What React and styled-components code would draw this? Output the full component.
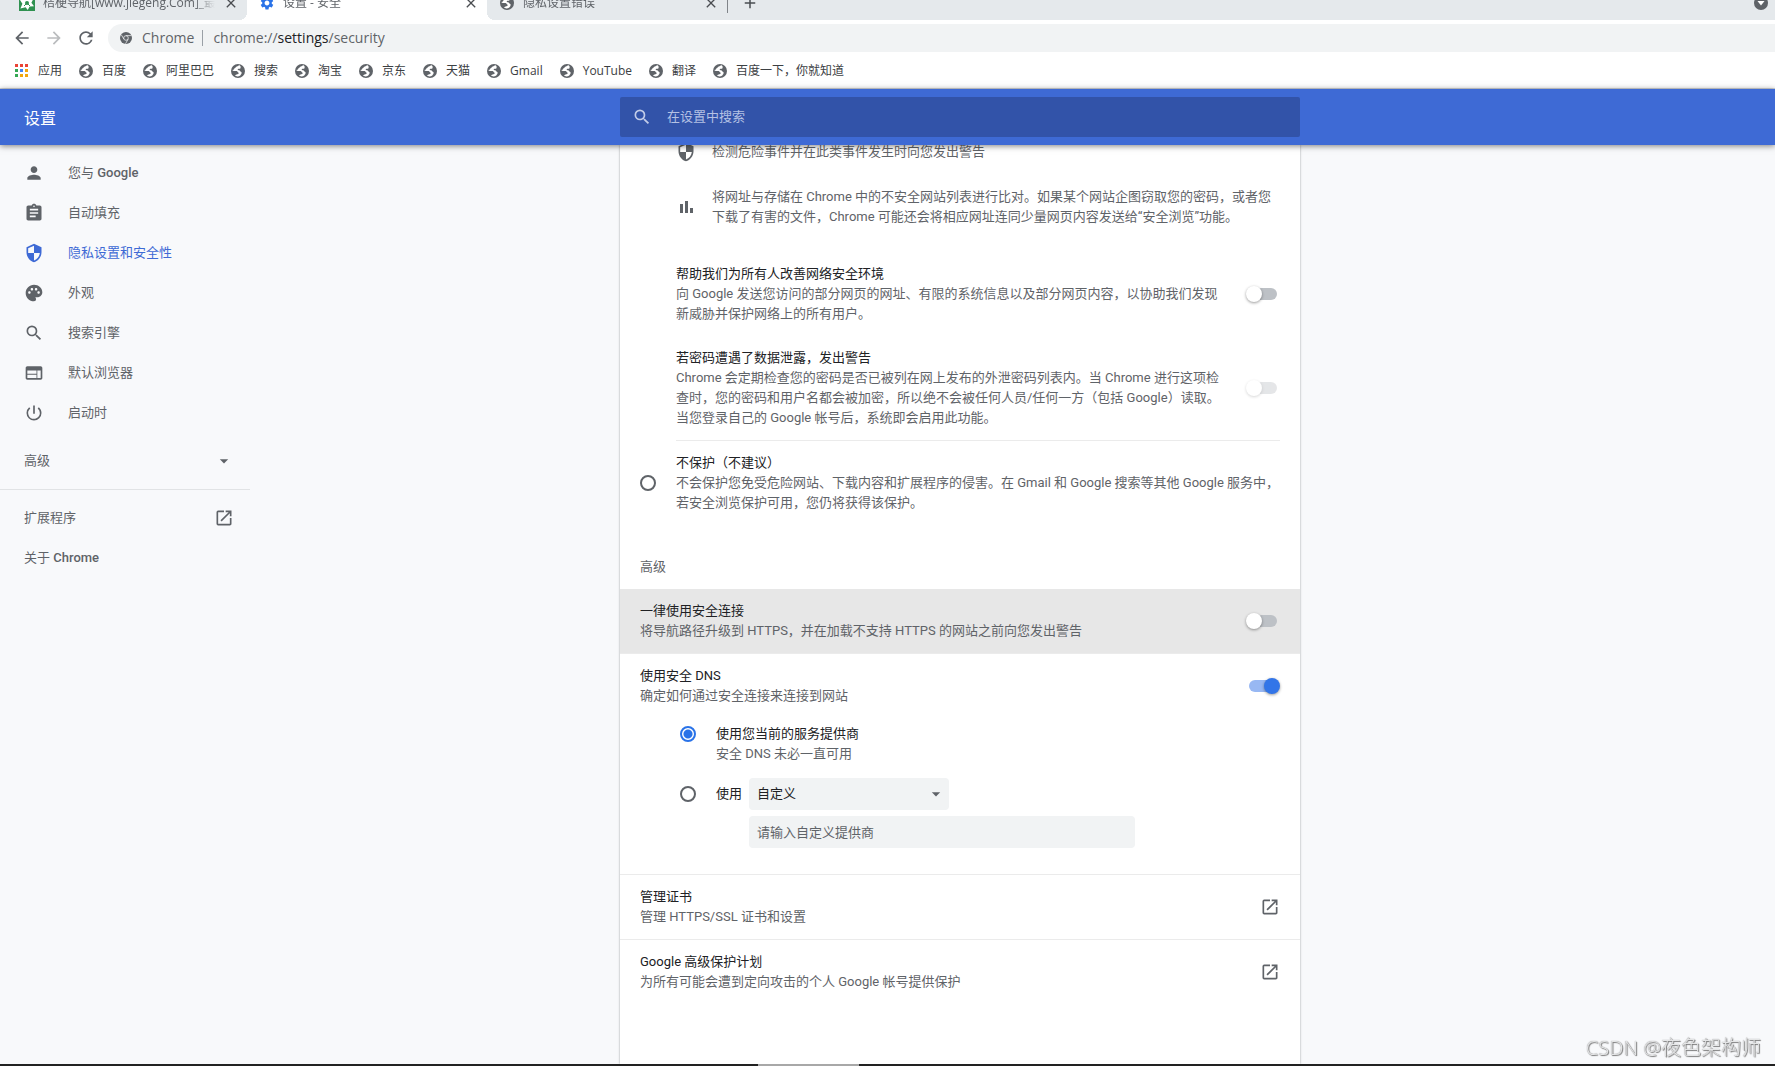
import React, { useState } from 'react'
import styled, { createGlobalStyle } from 'styled-components'
import {
  MdAdd,
  MdArrowBack,
  MdArrowDropDown,
  MdArrowForward,
  MdAssignment,
  MdClose,
  MdOpenInNew,
  MdPalette,
  MdPerson,
  MdPowerSettingsNew,
  MdRefresh,
  MdSearch,
  MdSecurity,
  MdSettings,
  MdWeb,
} from 'react-icons/md'

const GlobalStyle = createGlobalStyle`
  * {
    box-sizing: border-box;
  }
  body {
    margin: 0;
    background: #f8f9fb;
    color: #202124;
    font-family: Roboto, "Noto Sans CJK SC", sans-serif;
    font-size: 13px;
    line-height: 20px;
  }
  button, input, select {
    font: inherit;
    color: inherit;
  }
  button {
    display: flex;
    padding: 0;
    border: none;
    background: none;
    cursor: pointer;
  }
  a {
    color: inherit;
    text-decoration: none;
  }
  svg {
    display: block;
    flex: none;
  }
`
const Window = styled.div`
  height: 100vh;
  display: flex;
  flex-direction: column;
  overflow: hidden;
`
const Browser = styled.div`
  flex: none;
  background: #fff;
  border-bottom: 1px solid #d5d7da;
  font-family: "Open Sans", "Noto Sans CJK SC", sans-serif;
  font-size: 12px;
`
const TabStrip = styled.div`
  height: 20px;
  display: flex;
  align-items: flex-end;
  padding: 0 7px;
  background: #e5e9ec;
  overflow: hidden;
`
const Tab = styled.div`
  position: relative;
  width: 240px;
  height: 34px;
  display: flex;
  align-items: center;
  gap: 8px;
  padding: 0 8px 0 12px;
  color: #5f6368;
  background: ${props => props.$active ? '#fff' : 'transparent'};

  /* rounded feet of the selected tab */
  &::before, &::after {
    content: "";
    display: ${props => props.$active ? 'block' : 'none'};
    position: absolute;
    bottom: 0;
    width: 8px;
    height: 8px;
  }
  &::before {
    right: 100%;
    background: radial-gradient(circle at 0 0, transparent 8px, #fff 8px);
  }
  &::after {
    left: 100%;
    background: radial-gradient(circle at 100% 0, transparent 8px, #fff 8px);
  }
`
const TabTitle = styled.span`
  flex: 1;
  overflow: hidden;
  white-space: nowrap;
  mask-image: linear-gradient(to right, #000 88%, transparent);
`
const TabDivider = styled.span`
  width: 1px;
  height: 20px;
  margin: 0 13px 7px 0;
  background: #808489;
`
const StripButton = styled.button`
  height: 34px;
  align-items: center;
  color: #4a4d51;
`
const Spacer = styled.span`
  flex: 1;
`
const Toolbar = styled.div`
  display: flex;
  align-items: center;
  gap: 12px;
  padding: 4px 0 0 12px;
`
const ToolButton = styled.button`
  color: ${props => props.$off ? '#babcbe' : '#5f6368'};
`
const Omnibox = styled.div`
  flex: 1;
  height: 28px;
  display: flex;
  align-items: center;
  padding-left: 12px;
  border-radius: 14px 0 0 14px;
  background: #f1f3f4;
  color: #5f6368;
  font-size: 14px;
`
const SiteName = styled.span`
  padding: 0 8px 0 10px;
`
const SiteDivider = styled.span`
  width: 1px;
  height: 16px;
  margin-right: 10px;
  background: #9aa0a6;
`
const Address = styled.span`
  outline: none;

  b {
    color: #202124;
    font-weight: normal;
  }
`
const Bookmarks = styled.nav`
  height: 36px;
  display: flex;
  align-items: center;
  gap: 16px;
  padding: 1px 0 0 14px;
`
const Bookmark = styled.a`
  display: flex;
  align-items: center;
  gap: 8px;
  color: #3c4043;
  white-space: nowrap;
`
const Header = styled.header`
  position: relative;
  z-index: 1;
  flex: none;
  height: 56px;
  display: grid;
  grid-template-columns: 620fr minmax(0, 680px) 475fr;
  align-items: center;
  background: #3e6ad5;
  color: #fff;
  box-shadow: 0 1px 6px rgba(0, 0, 0, 0.5);
`
const PageTitle = styled.h1`
  margin: 4px 0 0;
  padding-left: 24px;
  font-size: 16px;
  font-weight: normal;
`
const SearchBox = styled.label`
  height: 40px;
  display: flex;
  align-items: center;
  gap: 15px;
  padding: 0 12px;
  border-radius: 2px;
  background: #3253a9;
  color: #c2cce8;
`
const SearchInput = styled.input`
  flex: 1;
  padding: 0;
  border: none;
  outline: none;
  background: none;

  &::placeholder {
    color: #b4c1e4;
  }
`
const Main = styled.main`
  flex: 1;
  min-height: 0;
  display: grid;
  grid-template-columns: 620fr minmax(0, 680px) 475fr;
  overflow: hidden;
`
const Menu = styled.nav`
  width: 250px;
  padding-top: 8px;
  color: #5f6368;
`
const MenuGroup = styled.div`
  & + & {
    margin-top: 8px;
  }
  & + &:last-child {
    padding-top: 8px;
    border-top: 1px solid #e1e3e5;
  }
`
const MenuItem = styled.a`
  width: 100%;
  height: 40px;
  display: flex;
  align-items: center;
  gap: 24px;
  padding: 0 16px 0 24px;
  color: ${props => props.$selected ? '#3e6ad5' : 'inherit'};
`
const Brand = styled.span`
  font-weight: 500;
`
const Card = styled.section`
  background: #fff;
  box-shadow: 0 0 2px rgba(60, 64, 67, 0.5);
  overflow: hidden;
`
const Scrolled = styled.div`
  margin-top: -3px;
`
const Feature = styled.div`
  display: flex;
  align-items: center;
  gap: 16px;
  margin: 0 20px 25px 56px;
  color: #5f6368;
`
const Indented = styled.div`
  margin: 0 20px 0 56px;
`
const Row = styled.div`
  min-height: 64px;
  display: flex;
  align-items: center;
  gap: 20px;
  padding: ${props => props.$flush ? '12px 0' : '12px 20px'};
  background: ${props => props.$hover ? '#e7e7e7' : 'transparent'};
`
const Rule = styled.hr`
  margin: 0;
  border: none;
  border-top: 1px solid #ebebeb;
`
const Label = styled.label`
  flex: 1;
  display: block;
`
const Secondary = styled.span`
  display: block;
  color: #5f6368;
`
const SectionTitle = styled.h2`
  margin: 44px 20px 12px;
  color: #5f6368;
  font-size: 13px;
  font-weight: normal;
`
const Switch = styled.input.attrs({ type: 'checkbox', role: 'switch' })`
  appearance: none;
  position: relative;
  flex: none;
  width: 34px;
  height: 16px;
  margin: 0;
  opacity: ${props => props.disabled ? 0.4 : 1};

  &::before {
    content: "";
    position: absolute;
    inset: 2px 3px;
    border-radius: 6px;
    background: #bdc1c6;
  }
  &::after {
    content: "";
    position: absolute;
    left: 0;
    width: 16px;
    height: 16px;
    border-radius: 50%;
    background: #fff;
    box-shadow: 0 1px 3px rgba(0, 0, 0, 0.4);
  }
  &:checked::before {
    background: #98b8f3;
  }
  &:checked::after {
    left: 18px;
    background: #3275e8;
  }
`
const Radio = styled.input.attrs({ type: 'radio' })`
  appearance: none;
  flex: none;
  width: 16px;
  height: 16px;
  margin: 0;
  border: 2px solid #5f6368;
  border-radius: 50%;

  &:checked {
    border-color: #2a73e8;
    background: radial-gradient(circle, #2a73e8 4px, #fff 5px);
  }
`
const RadioRow = styled.div`
  display: flex;
  align-items: center;
  gap: 20px;
  padding: 12px 20px 0;
`
const DnsOptions = styled.div`
  display: grid;
  grid-template-columns: 16px 1fr;
  column-gap: 20px;
  padding: 6px 20px 26px 60px;
`
const DnsChoice = styled.div`
  display: flex;
  align-items: center;
  gap: 7px;
  padding-top: 14px;
`
const RadioSlot = styled.div`
  display: flex;
  padding-top: ${props => props.$lower ? '22px' : '2px'};
`
const SelectBox = styled.div`
  width: 200px;
  display: grid;
  align-items: center;

  select, svg {
    grid-area: 1 / 1;
  }
  svg {
    justify-self: end;
    margin-right: 3px;
    color: #5f6368;
    pointer-events: none;
  }
`
const Select = styled.select`
  appearance: none;
  height: 32px;
  padding: 0 8px;
  border: none;
  border-radius: 4px;
  background: #f1f3f4;
`
const CustomInput = styled.input`
  grid-column: 2;
  width: 386px;
  max-width: 100%;
  height: 32px;
  margin: 6px 0 0 33px;
  padding: 0 8px;
  border: none;
  border-radius: 4px;
  background: #f1f3f4;

  &::placeholder {
    color: #5f6368;
  }
`
const IconLink = styled.a`
  color: #5f6368;
`
const Taskbar = styled.div`
  flex: none;
  height: 2px;
  background: linear-gradient(#a8a8a8, #a8a8a8) 45.3% 0 / 101px 2px no-repeat #222;
`
const Watermark = styled.div`
  position: fixed;
  right: 14px;
  bottom: 4px;
  color: #e4e5e6;
  font-family: "Noto Sans", "Noto Sans CJK SC", sans-serif;
  font-size: 20px;
  font-weight: 300;
  line-height: 28px;
  text-shadow: 1px 1px 1px #777, 0 0 1px #777;
`

const Globe = ({ size = 16 }) => (
  <svg width={size} height={size} viewBox="0 0 16 16">
    <circle cx="8" cy="8" r="7" fill="#5f6368" />
    <path
      fill="#fff"
      d="M9.8 2.3c-1.5.1-1.9 1-3 1.2-.9.3-1 1.3-2 1.6-.6.3-.4 1-.9 1.4l-1.5.6c.1.9 1.2 1 2 1h2.2c.8 0 .8 1.2 1.5 1.3.9.2.9.9.2 1.4-.7.4-1.1.8-1.8.7-.9 0-1 .9-1.6 1.1 1.3 1.1 3.8 1.1 5.4-.2 1-.9 1.4-1.8 1.3-2.8-.2-.9-1.2-.9-1.5-1.6-.4-.8-1.6-.6-2.1-1-.5-.5-.3-1.1.5-1.3.7-.1 1.3.2 1.8-.3.5-.6.2-1.1.4-1.6z"
    />
  </svg>
)

const StarFavicon = () => (
  <svg width="16" height="16" viewBox="0 0 16 16">
    <rect width="16" height="16" fill="#2f9150" />
    <path
      fill="#fff"
      d="M8 1l2 3.6 4.6-1.1-2.2 4.2 2.6 3.6-4.4.3L8.8 15l-2.2-2.8-5.2 1.2 2-4.6L1 5l4.6-.3z"
    />
    <circle cx="8" cy="8" r="2" fill="#2f9150" />
    <path stroke="#2f9150" d="M8 8l3 3M8 8l-3 3" />
  </svg>
)

const ChromeIcon = () => (
  <svg width="12" height="12" viewBox="0 0 24 24">
    <circle cx="12" cy="12" r="12" fill="#5f6368" />
    <circle cx="12" cy="12" r="4.6" fill="none" stroke="#f1f3f4" strokeWidth="1.5" />
    <path fill="none" stroke="#f1f3f4" strokeWidth="1.5" d="M12 7.2h11M7.8 14.3L2.6 5.5M16.2 14.3L11 23.5" />
  </svg>
)

const AppsIcon = () => {
  const colors = ['#ea4335', '#ea4335', '#ea4335', '#34a853', '#4285f4', '#f2a60c', '#34a853', '#f2a60c', '#f2a60c']
  return (
    <svg width="16" height="16" viewBox="0 0 16 16">
      {colors.map((color, i) => (
        <rect key={i} x={1 + (i % 3) * 5} y={1 + Math.floor(i / 3) * 5} width="3" height="3" fill={color} />
      ))}
    </svg>
  )
}

const BarsIcon = () => (
  <svg width="20" height="20" viewBox="0 0 20 20" fill="#5f6368">
    <path d="M4 7h3v9H4zM9 4h3v12H9zM14 11h3v5h-3z" />
  </svg>
)

const TabMenuIcon = () => (
  <svg width="14" height="14" viewBox="0 0 14 14">
    <circle cx="7" cy="7" r="7" fill="#5f6368" />
    <path d="M3.5 5h7L7 9.5z" fill="#fff" />
  </svg>
)

const bookmarks = ['百度', '阿里巴巴', '搜索', '淘宝', '京东', '天猫', 'Gmail', 'YouTube', '翻译', '百度一下，你就知道']

const menu = [
  { id: 'people', text: '您与 ', brand: 'Google', Icon: MdPerson },
  { id: 'autofill', text: '自动填充', Icon: MdAssignment },
  { id: 'privacy', text: '隐私设置和安全性', Icon: MdSecurity, selected: true },
  { id: 'appearance', text: '外观', Icon: MdPalette },
  { id: 'search', text: '搜索引擎', Icon: MdSearch },
  { id: 'browser', text: '默认浏览器', Icon: MdWeb },
  { id: 'startup', text: '启动时', Icon: MdPowerSettingsNew },
]

const links = [
  { title: '管理证书', text: '管理 HTTPS/SSL 证书和设置' },
  { title: 'Google 高级保护计划', text: '为所有可能会遭到定向攻击的个人 Google 帐号提供保护' },
]

function ToggleRow({ id, title, text, flush, hover, disabled, on }) {
  const [checked, setChecked] = useState(!!on)
  return (
    <Row $flush={flush} $hover={hover}>
      <Label htmlFor={id}>
        {title}
        <Secondary>{text}</Secondary>
      </Label>
      <Switch id={id} checked={checked} disabled={disabled} onChange={()=>setChecked(!checked)} />
    </Row>
  )
}

function BrowserBar() {
  return (
    <Browser>
      <TabStrip>
        <Tab>
          <StarFavicon />
          <TabTitle>桔梗导航[www.jiegeng.Com]_最</TabTitle>
          <StripButton aria-label="关闭"><MdClose size={16} /></StripButton>
        </Tab>
        <Tab $active>
          <MdSettings size={16} color="#2a73e8" />
          <TabTitle>设置 - 安全</TabTitle>
          <StripButton aria-label="关闭"><MdClose size={16} /></StripButton>
        </Tab>
        <Tab>
          <Globe />
          <TabTitle>隐私设置错误</TabTitle>
          <StripButton aria-label="关闭"><MdClose size={16} /></StripButton>
        </Tab>
        <TabDivider />
        <StripButton aria-label="打开新的标签页"><MdAdd size={18} /></StripButton>
        <Spacer />
        <StripButton aria-label="搜索标签页"><TabMenuIcon /></StripButton>
      </TabStrip>
      <Toolbar>
        <ToolButton aria-label="后退"><MdArrowBack size={20} /></ToolButton>
        <ToolButton aria-label="前进" $off><MdArrowForward size={20} /></ToolButton>
        <ToolButton aria-label="重新加载"><MdRefresh size={20} /></ToolButton>
        <Omnibox>
          <ChromeIcon />
          <SiteName>Chrome</SiteName>
          <SiteDivider />
          <Address role="textbox" aria-label="地址" contentEditable suppressContentEditableWarning spellCheck={false}>
            chrome://<b>settings</b>/security
          </Address>
        </Omnibox>
      </Toolbar>
      <Bookmarks>
        <Bookmark href="#apps"><AppsIcon />应用</Bookmark>
        {bookmarks.map(name => (
          <Bookmark href="#bookmark" key={name}><Globe />{name}</Bookmark>
        ))}
      </Bookmarks>
    </Browser>
  )
}

function SideMenu() {
  return (
    <Menu>
      <MenuGroup>
        {menu.map(({ id, text, brand, Icon, selected }) => (
          <MenuItem href={'#'+id} key={id} $selected={selected}>
            <Icon size={20} />
            <span>{text}{brand && <Brand>{brand}</Brand>}</span>
          </MenuItem>
        ))}
      </MenuGroup>
      <MenuGroup>
        <MenuItem as="button">高级<Spacer /><MdArrowDropDown size={20} /></MenuItem>
      </MenuGroup>
      <MenuGroup>
        <MenuItem href="#extensions">扩展程序<Spacer /><MdOpenInNew size={20} /></MenuItem>
        <MenuItem href="#about"><span>关于 <Brand>Chrome</Brand></span></MenuItem>
      </MenuGroup>
    </Menu>
  )
}

function App() {
  const [dns, setDns] = useState('current')

  return (
    <Window>
      <GlobalStyle />
      <BrowserBar />
      <Header>
        <PageTitle>设置</PageTitle>
        <SearchBox>
          <MdSearch size={20} />
          <SearchInput type="text" placeholder="在设置中搜索" />
        </SearchBox>
      </Header>
      <Main>
        <SideMenu />
        <Card>
          <Scrolled>
            <Feature>
              <MdSecurity size={20} />
              检测危险事件并在此类事件发生时向您发出警告
            </Feature>
            <Feature>
              <BarsIcon />
              将网址与存储在 Chrome 中的不安全网站列表进行比对。如果某个网站企图窃取您的密码，或者您下载了有害的文件，Chrome 可能还会将相应网址连同少量网页内容发送给“安全浏览”功能。
            </Feature>
            <Indented>
              <ToggleRow
                id="report"
                flush
                title="帮助我们为所有人改善网络安全环境"
                text="向 Google 发送您访问的部分网页的网址、有限的系统信息以及部分网页内容，以协助我们发现新威胁并保护网络上的所有用户。"
              />
              <ToggleRow
                id="leak"
                flush
                disabled
                title="若密码遭遇了数据泄露，发出警告"
                text="Chrome 会定期检查您的密码是否已被列在网上发布的外泄密码列表内。当 Chrome 进行这项检查时，您的密码和用户名都会被加密，所以绝不会被任何人员/任何一方（包括 Google）读取。当您登录自己的 Google 帐号后，系统即会启用此功能。"
              />
              <Rule />
            </Indented>
            <RadioRow>
              <Radio id="none" name="protection" />
              <Label htmlFor="none">
                不保护（不建议）
                <Secondary>不会保护您免受危险网站、下载内容和扩展程序的侵害。在 Gmail 和 Google 搜索等其他 Google 服务中，若安全浏览保护可用，您仍将获得该保护。</Secondary>
              </Label>
            </RadioRow>
            <SectionTitle>高级</SectionTitle>
            <ToggleRow
              id="https"
              hover
              title="一律使用安全连接"
              text="将导航路径升级到 HTTPS，并在加载不支持 HTTPS 的网站之前向您发出警告"
            />
            <Rule />
            <ToggleRow id="dns" on title="使用安全 DNS" text="确定如何通过安全连接来连接到网站" />
            <DnsOptions>
              <RadioSlot>
                <Radio id="current" name="dns" checked={dns=='current'} onChange={()=>setDns('current')} />
              </RadioSlot>
              <Label htmlFor="current">
                使用您当前的服务提供商
                <Secondary>安全 DNS 未必一直可用</Secondary>
              </Label>
              <RadioSlot $lower>
                <Radio id="custom" name="dns" checked={dns=='custom'} onChange={()=>setDns('custom')} />
              </RadioSlot>
              <DnsChoice>
                <label htmlFor="custom">使用</label>
                <SelectBox>
                  <Select aria-label="服务提供商">
                    <option>自定义</option>
                  </Select>
                  <MdArrowDropDown size={20} />
                </SelectBox>
              </DnsChoice>
              <CustomInput type="text" aria-label="自定义提供商" placeholder="请输入自定义提供商" />
            </DnsOptions>
            {links.map(({ title, text }) => (
              <React.Fragment key={title}>
                <Rule />
                <Row>
                  <Label as="div">
                    {title}
                    <Secondary>{text}</Secondary>
                  </Label>
                  <IconLink href="#open" aria-label={title}><MdOpenInNew size={20} /></IconLink>
                </Row>
              </React.Fragment>
            ))}
          </Scrolled>
        </Card>
      </Main>
      <Taskbar />
      <Watermark>CSDN @夜色架构师</Watermark>
    </Window>
  )
}

export default App
